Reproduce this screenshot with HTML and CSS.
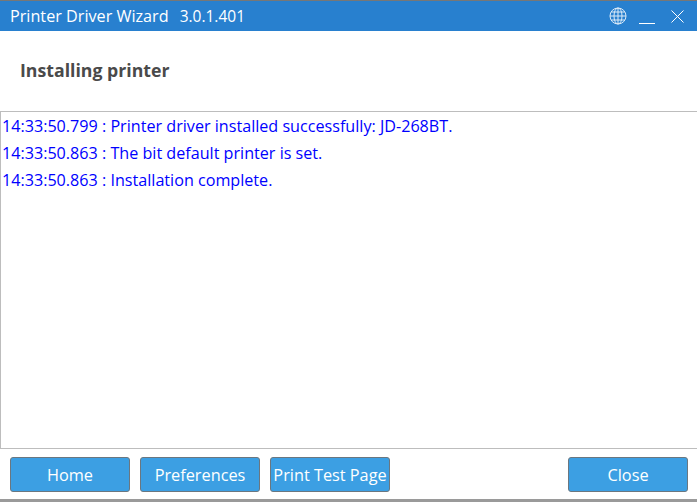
FILE: index.html
```html
<!DOCTYPE html>
<html>
<head>
<meta charset="utf-8">
<title>Printer Driver Wizard</title>
<link rel="stylesheet" href="styles.css">
</head>
<body>
<div class="window">
  <header class="titlebar">
    <span class="app-name">Printer Driver Wizard</span>
    <span class="version">3.0.1.401</span>
    <span class="spacer"></span>
    <svg class="globe" width="18" height="18" viewBox="0 0 18 18" fill="none" stroke="#dcebf8" stroke-width="1"><circle cx="9" cy="9" r="8"/><ellipse cx="9" cy="9" rx="4" ry="8"/><path d="M9 1v16M1 9h16M2.2 5h13.6M2.2 13h13.6"/></svg>
    <svg class="min" width="16" height="14" viewBox="0 0 16 14" stroke="#fff" stroke-width="1"><path d="M0 13.5h16"/></svg>
    <svg class="close" width="13" height="13" viewBox="0 0 13 13" stroke="#fff" stroke-width="1"><path d="M.5.5l12 12M12.5.5l-12 12"/></svg>
  </header>
  <div class="heading"><h1>Installing printer</h1></div>
  <div class="log">
    <div class="line">14:33:50.799 : Printer driver installed successfully: JD-268BT.</div>
    <div class="line">14:33:50.863 : The bit default printer is set.</div>
    <div class="line">14:33:50.863 : Installation complete.</div>
  </div>
  <footer class="actions">
    <button class="btn">Home</button>
    <button class="btn">Preferences</button>
    <button class="btn">Print Test Page</button>
    <span class="spacer"></span>
    <button class="btn">Close</button>
  </footer>
</div>
</body>
</html>
```
FILE: styles.css
```css
* { box-sizing: border-box; }
html, body { margin: 0; padding: 0; background: #fff; }
body { width: 697px; height: 502px; overflow: hidden; font-family: "Open Sans", "Noto Sans", sans-serif; }
.window { display: flex; flex-direction: column; height: 502px; border-bottom: 3px solid #9a9a9a; }
.titlebar { display: flex; align-items: center; height: 31px; flex: none; padding: 0 13px 0 10px; background: #2880cf; color: #fff; font-size: 16.2px; border-top: 1px solid #777; }
.version { margin-left: 11px; font-size: 15.5px; }
.spacer { flex: 1; }
.globe { margin-right: 12px; }
.min { margin-right: 16px; margin-top: 2px; }
.heading { height: 80px; flex: none; display: flex; align-items: center; padding-left: 20px; }
h1 { margin: 0 0 2px; font-size: 17.7px; font-weight: 700; color: #4a4a4a; }
.log { height: 338px; flex: none; border: 1px solid #bdbdbd; border-right: 0; padding: 1px 0 0 1px; color: #0000ff; font-size: 16.15px; }
.line { height: 27px; line-height: 26px; white-space: nowrap; }
.actions { flex: 1; display: flex; align-items: center; gap: 10px; padding: 1px 9px 0 10px; }
.btn { width: 120px; height: 35px; padding: 0; border: 1px solid #6b7780; border-radius: 3px; background: #3c9fe3; color: #fff; font: inherit; font-size: 16.3px; }
```
